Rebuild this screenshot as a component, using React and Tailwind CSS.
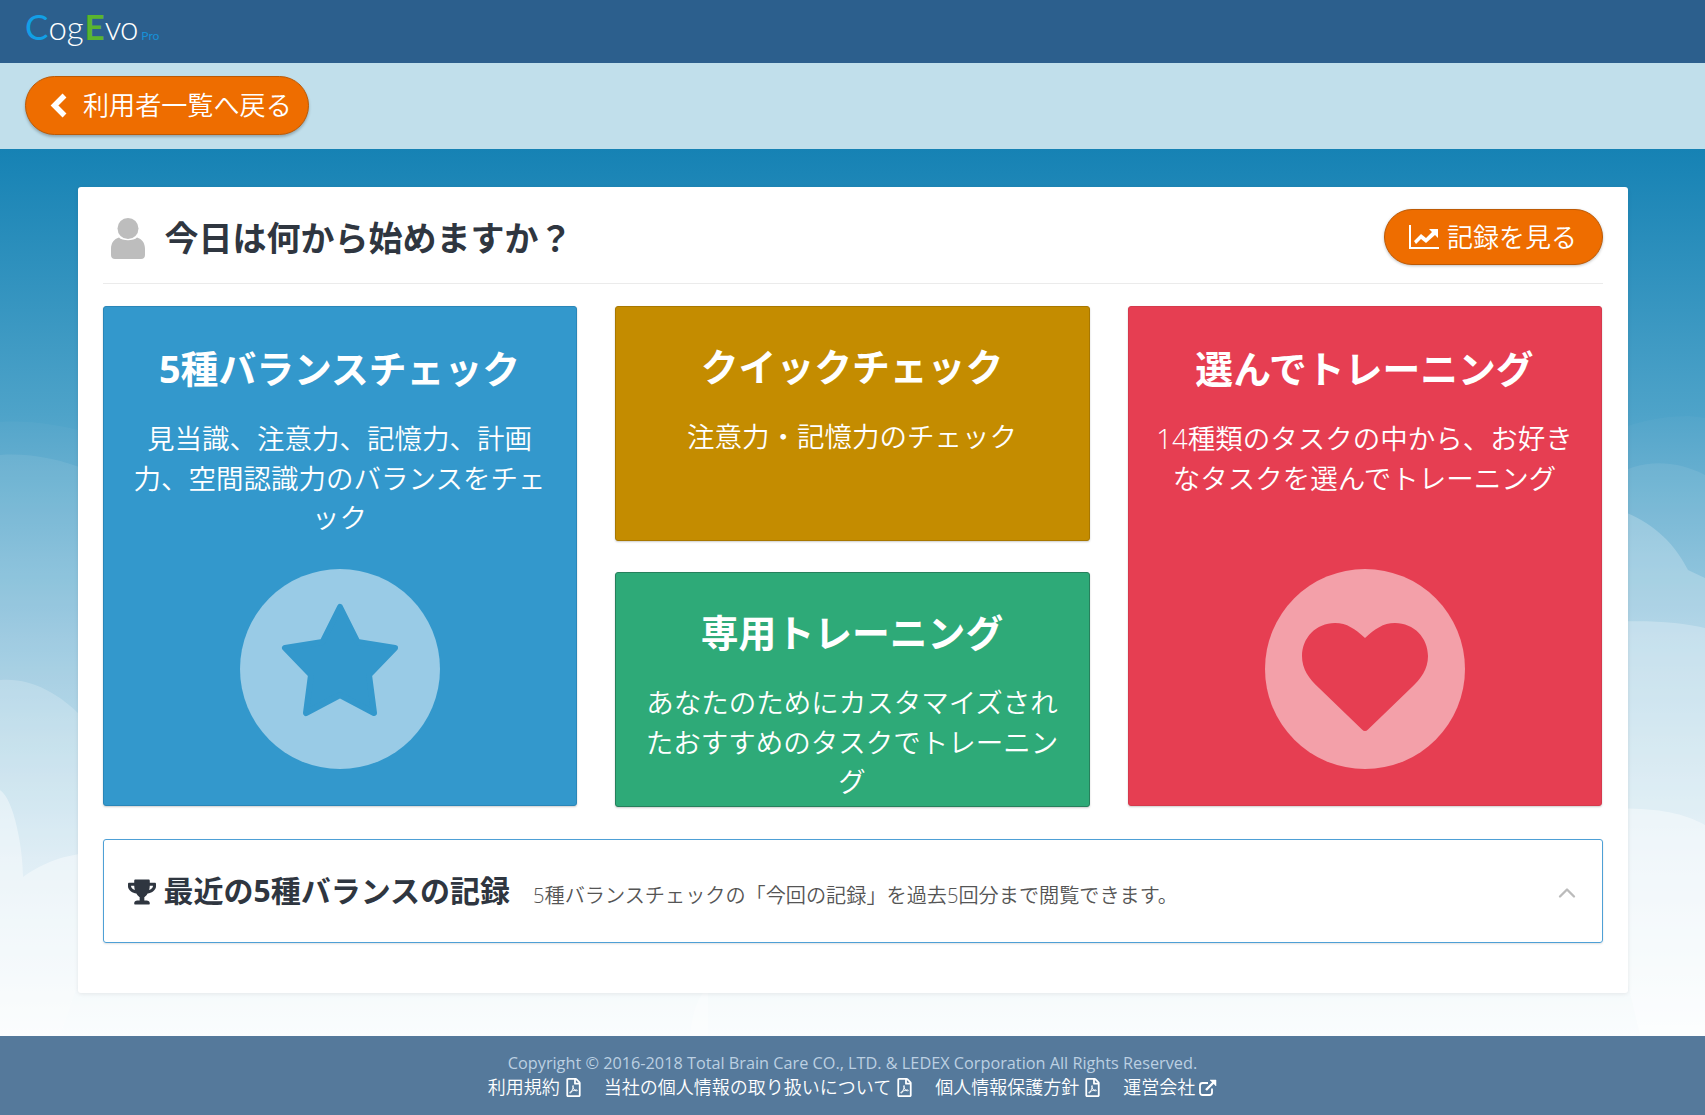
import React from "react";
import { FaTrophy, FaRegFilePdf } from "react-icons/fa";
import { ChevronUp } from "lucide-react";

function Clouds() {
  return (
    <svg className="absolute inset-0 w-full h-full" viewBox="0 0 1705 887" preserveAspectRatio="none">
      <defs>
        <linearGradient id="sky" x1="0" y1="0" x2="0" y2="1">
          <stop offset="0" stopColor="#1682b4" />
          <stop offset="0.3" stopColor="#4ea3c9" />
          <stop offset="0.55" stopColor="#94c6de" />
          <stop offset="0.8" stopColor="#d3e8f2" />
          <stop offset="1" stopColor="#f8fcfd" />
        </linearGradient>
      </defs>
      <rect width="1705" height="887" fill="url(#sky)" />
      <path d="M0 273 C30 271 60 276 90 284 L1610 284 C1640 270 1680 264 1705 269 L1705 887 L0 887Z" fill="#fff" opacity="0.03" />
      <path d="M0 306 C30 304 60 310 90 322 L1610 330 C1635 312 1670 308 1705 326 L1705 887 L0 887Z" fill="#fff" opacity="0.08" />
      <path d="M1600 355 C1640 365 1670 385 1688 421 L1705 429 L1705 887 L1640 887 L1628 835 L1600 835Z" fill="#fff" opacity="0.22" />
      <path d="M0 531 C30 528 60 545 80 566 L90 835 L78 835 L60 887 L0 887Z" fill="#fff" opacity="0.2" />
      <path d="M1600 474 C1640 470 1680 473 1705 479 L1705 887 L1640 887 L1628 835 L1600 835Z" fill="#fff" opacity="0.25" />
      <path d="M0 641 C14 650 23 700 23 728 C40 716 60 706 90 704 L1600 660 C1650 658 1680 662 1705 676 L1705 887 L0 887Z" fill="#fff" opacity="0.4" />
      <path d="M690 887 C692 860 700 845 708 838 L708 887Z" fill="#fff" opacity="0.3" />
    </svg>
  );
}

function Circle({ children, tint }) {
  return (
    <div className={`mt-auto mb-[36px] mx-auto w-[200px] h-[200px] rounded-full ${tint}`}>
      {children}
    </div>
  );
}

function Tile({ title, text, bg, top, gap, children, className = "" }) {
  return (
    <div className={`flex flex-col rounded-[3px] border shadow-[0_1px_2px_rgba(0,0,0,0.2)] text-white text-center px-[23px] ${bg} ${top} ${className}`}>
      <div className="text-[37.800px] leading-[50px] font-bold">{title}</div>
      <div className={`text-[27.500px] leading-[39.500px] font-[350] ${gap}`}>{text}</div>
      {children}
    </div>
  );
}

function FootLink({ label, icon }) {
  return (
    <span className="inline-flex items-center gap-[4px] text-white font-[350]">
      {label}
      {icon}
    </span>
  );
}

export default function App() {
  return (
    <div className="min-h-[1115px] flex flex-col font-['Open_Sans','Noto_Sans_CJK_JP',sans-serif] text-[#2f3640]">
      <header className="h-[63px] bg-[#2c5f8d] flex items-center pl-[25px]">
        <div className="flex items-baseline font-['Lato',sans-serif] font-light text-white leading-none mt-[-10px]">
          <span className="text-[35px] text-[#129fe6] font-normal">C</span>
          <span className="text-[33px]">og</span>
          <span className="text-[35px] text-[#5ab52f] font-bold ml-[1px]">E</span>
          <span className="text-[33px] tracking-[-1px]">vo</span>
          <span className="text-[12px] text-[#1790d8] ml-[4px] font-normal">Pro</span>
        </div>
      </header>

      <div className="h-[86px] bg-[#c1dfeb] flex items-center pl-[25px] pb-[1px]">
        <button className="h-[59px] w-[284px] rounded-full bg-[#ee6d00] border border-[#bd5a05] shadow-[0_2px_3px_rgba(0,0,0,0.25)] text-white text-[26.100px] font-[350] flex items-center pl-[24px] gap-[16px]">
          <svg width="17" height="25" viewBox="0 0 17 25" fill="none" stroke="#fff" strokeWidth="5.500">
            <path d="M14.500 2.500 L4.500 12.500 L14.500 22.500" />
          </svg>
          利用者一覧へ戻る
        </button>
      </div>

      <main className="relative flex-1 pt-[38px] pb-[43px]">
        <Clouds />
        <section className="relative w-[1550px] mx-auto bg-white rounded-[3px] shadow-[0_1px_4px_rgba(0,0,0,0.08)] px-[25px] pb-[50px]">
          <div className="h-[97px] border-b border-[#ebebeb] flex items-center justify-between pl-[8px] pt-[4px]">
            <div className="flex items-center gap-[20px]">
              <svg width="34" height="41" viewBox="0 0 34 41" fill="#bdbdbd" className="mt-[2px]">
                <circle cx="17" cy="10.500" r="10.500" />
                <path d="M8 19.500 C11 23 23 23 26 19.500 C31 21 34 25 34 31 L34 37 C34 39.500 32.500 41 30 41 L4 41 C1.500 41 0 39.500 0 37 L0 31 C0 25 3 21 8 19.500Z" />
              </svg>
              <h1 className="text-[34px] font-bold leading-none mt-[2px]">今日は何から始めますか？</h1>
            </div>
            <button className="h-[56px] w-[219px] rounded-full bg-[#ee6d00] border border-[#bd5a05] shadow-[0_1px_3px_rgba(0,0,0,0.25)] text-white text-[26px] font-[350] flex items-center justify-center gap-[8px]">
              <svg width="30" height="24" viewBox="0 0 30 24" fill="#fff">
                <path d="M0 0 H2 V22 H30 V24 H0Z" />
                <path d="M5 16 L12 9 L17 13 L23 7 L20 4 H29 V13 L26 10 L17 18 L12 14 L7 19Z" />
              </svg>
              記録を見る
            </button>
          </div>

          <div className="mt-[22px] w-[1499px] grid grid-cols-[474px_475px_474px] justify-between grid-rows-[235px_235px] gap-y-[31px]">
            <Tile className="row-span-2 h-[500px]" bg="bg-[#3398cc] border-[#2a86b8]" top="pt-[37px]" gap="mt-[25px]" title="5種バランスチェック" text="見当識、注意力、記憶力、計画力、空間認識力のバランスをチェック">
              <Circle tint="bg-[#99cbe6]">
                <svg width="200" height="200" viewBox="0 0 200 200" fill="#3398cc" stroke="#3398cc" strokeWidth="6" strokeLinejoin="round">
                  <path d="M100 38 L117.500 73 L155 79 L129 106 L134 144 L100 126 L66 144 L71 106 L45 79 L82.500 73Z" />
                </svg>
              </Circle>
            </Tile>
            <Tile bg="bg-[#c48c00] border-[#a87800]" top="pt-[35px]" gap="mt-[25px]" title="クイックチェック" text="注意力・記憶力のチェック" />
            <Tile className="row-span-2 h-[500px]" bg="bg-[#e63e52] border-[#d53a4c]" top="pt-[37px]" gap="mt-[25px]" title="選んでトレーニング" text="14種類のタスクの中から、お好きなタスクを選んでトレーニング">
              <Circle tint="bg-[#f3a0a9]">
                <svg width="200" height="200" viewBox="0 0 200 200" fill="#e63e52">
                  <path d="M100 69 C90 60 82 54 70 54 C51 54 37 69 37 87 C37 100 44 110 54 119 L97 160.500 C99 162.500 101 162.500 103 160.500 L146 119 C156 110 163 100 163 87 C163 69 149 54 130 54 C118 54 110 60 100 69Z" />
                </svg>
              </Circle>
            </Tile>
            <Tile bg="bg-[#2eaa78] border-[#26805c]" top="pt-[35px]" gap="mt-[25px]" title="専用トレーニング" text="あなたのためにカスタマイズされたおすすめのタスクでトレーニング" />
          </div>

          <div className="mt-[32px] h-[104px] border border-[#4ea0d6] rounded-[3px] shadow-[0_1px_2px_rgba(0,0,0,0.12)] flex items-center pl-[24px] pr-[21px]">
            <FaTrophy className="text-[28px] mr-[8px] mt-[2px]" />
            <span className="text-[30px] font-bold leading-none">最近の5種バランスの記録</span>
            <span className="ml-[23px] text-[20.150px] text-[#555] mt-[8px] leading-none font-[350]">5種バランスチェックの「今回の記録」を過去5回分まで閲覧できます。</span>
            <ChevronUp className="ml-auto text-[#bbbbbb] mt-[4px]" size={28} strokeWidth={2} />
          </div>
        </section>
      </main>

      <footer className="h-[79px] bg-[#55799b] flex flex-col items-center pt-[15px] leading-[24px]">
        <div className="text-[16.250px] text-[#bcd0e2]">Copyright © 2016-2018 Total Brain Care CO., LTD. &amp; LEDEX Corporation All Rights Reserved.</div>
        <div className="flex gap-[21px] text-[18px]">
          <FootLink label="利用規約" icon={<FaRegFilePdf className="text-[19px]" />} />
          <FootLink label="当社の個人情報の取り扱いについて" icon={<FaRegFilePdf className="text-[19px]" />} />
          <FootLink label="個人情報保護方針" icon={<FaRegFilePdf className="text-[19px]" />} />
          <FootLink
            label="運営会社"
            icon={
              <svg width="18" height="17" viewBox="0 0 18 17" fill="none" stroke="#fff">
                <path d="M13 9.500 V13.500 C13 15 12 16 10.500 16 H3.500 C2 16 1 15 1 13.500 V6.500 C1 5 2 4 3.500 4 H9" strokeWidth="1.800" />
                <path d="M7 11 L15 3" strokeWidth="2.400" />
                <path d="M11 1 H17 V7Z" fill="#fff" strokeWidth="0.500" />
              </svg>
            }
          />
        </div>
      </footer>
    </div>
  );
}
